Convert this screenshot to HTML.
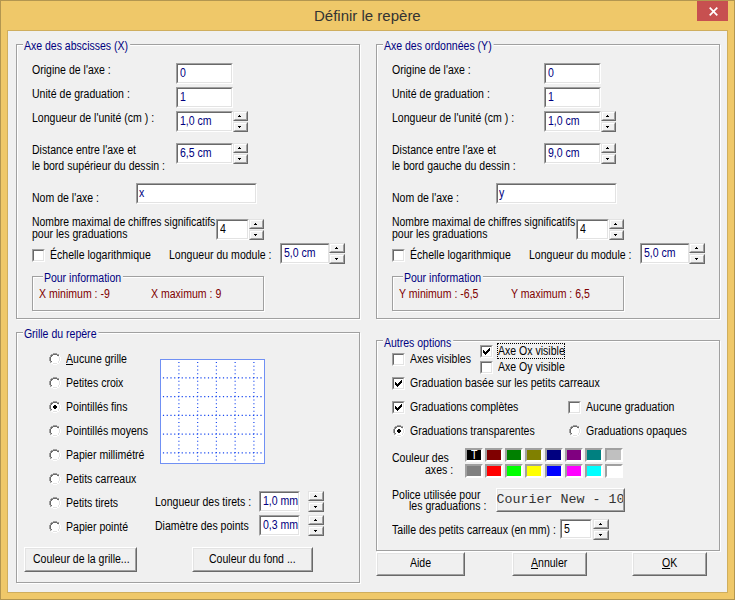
<!DOCTYPE html>
<html><head><meta charset="utf-8"><style>
html,body{margin:0;padding:0;width:735px;height:600px;overflow:hidden;position:relative;background:#efc869}
div,svg,span{position:absolute;box-sizing:border-box}
svg{overflow:visible}
.t{font-family:"Liberation Sans",sans-serif;font-size:12px;line-height:14px;white-space:pre;transform-origin:0 0;color:#000}
u{text-decoration:underline}
</style></head><body>
<div style="left:0px;top:0px;width:735px;height:600px;background:#efc869;border:1px solid #b39650;box-sizing:border-box;"></div>
<div style="left:7px;top:30px;width:721px;height:563px;background:#f0f0f0;border:1px solid #cfae5e;box-sizing:border-box;"></div>
<div style="left:697px;top:1px;width:31px;height:20px;background:#c75050;"></div>
<svg style="left:697px;top:1px" width="31" height="20"><path d="M12.7 6.7l7.6 7.6M20.3 6.7l-7.6 7.6" stroke="#fff" stroke-width="1.7"/></svg>
<span class="t" style="left:314px;top:7px;font-size:15px;line-height:18px;color:#333;transform:scaleX(1)">Définir le repère</span>
<div style="left:17px;top:45px;width:344px;height:275px;border:1px solid #fff;"></div>
<div style="left:16px;top:44px;width:344px;height:275px;border:1px solid #a0a0a0;"></div>
<span class="t" style="left:24px;top:39px;color:#000080;transform:scaleX(0.878);background:#f0f0f0;padding:0 2px 0 1px;margin-left:-1px;">Axe des abscisses (X)</span>
<span class="t" style="left:32px;top:63px;transform:scaleX(0.878);">Origine de l'axe :</span>
<span class="t" style="left:32px;top:87px;transform:scaleX(0.878);">Unité de graduation :</span>
<span class="t" style="left:32px;top:111px;transform:scaleX(0.878);">Longueur de l'unité (cm ) :</span>
<span class="t" style="left:32px;top:143px;transform:scaleX(0.878);">Distance entre l'axe et</span>
<span class="t" style="left:32px;top:159px;transform:scaleX(0.878);">le bord supérieur du dessin :</span>
<span class="t" style="left:32px;top:191px;transform:scaleX(0.878);">Nom de l'axe :</span>
<span class="t" style="left:32px;top:215px;transform:scaleX(0.868);">Nombre maximal de chiffres significatifs</span>
<span class="t" style="left:32px;top:227px;transform:scaleX(0.878);">pour les graduations</span>
<div style="left:176px;top:63px;width:57px;height:21px;background:#fff;border-style:solid;border-width:1px;border-color:#a0a0a0 #fff #fff #a0a0a0;"></div>
<div style="left:177px;top:64px;width:55px;height:19px;border-style:solid;border-width:1px;border-color:#696969 #e3e3e3 #e3e3e3 #696969;"></div>
<span class="t" style="left:180px;top:66px;color:#000080;transform:scaleX(0.878);">0</span>
<div style="left:176px;top:87px;width:57px;height:21px;background:#fff;border-style:solid;border-width:1px;border-color:#a0a0a0 #fff #fff #a0a0a0;"></div>
<div style="left:177px;top:88px;width:55px;height:19px;border-style:solid;border-width:1px;border-color:#696969 #e3e3e3 #e3e3e3 #696969;"></div>
<span class="t" style="left:180px;top:90px;color:#000080;transform:scaleX(0.878);">1</span>
<div style="left:176px;top:111px;width:57px;height:21px;background:#fff;border-style:solid;border-width:1px;border-color:#a0a0a0 #fff #fff #a0a0a0;"></div>
<div style="left:177px;top:112px;width:55px;height:19px;border-style:solid;border-width:1px;border-color:#696969 #e3e3e3 #e3e3e3 #696969;"></div>
<span class="t" style="left:180px;top:114px;color:#000080;transform:scaleX(0.878);">1,0 cm</span>
<div style="left:233px;top:111px;width:15px;height:10px;background:#f0f0f0;border-style:solid;border-width:1px;border-color:#e3e3e3 #696969 #696969 #e3e3e3;"></div>
<div style="left:234px;top:112px;width:13px;height:8px;border-style:solid;border-width:1px;border-color:#fff #a0a0a0 #a0a0a0 #fff;"></div>
<div style="left:233px;top:122px;width:15px;height:10px;background:#f0f0f0;border-style:solid;border-width:1px;border-color:#e3e3e3 #696969 #696969 #e3e3e3;"></div>
<div style="left:234px;top:123px;width:13px;height:8px;border-style:solid;border-width:1px;border-color:#fff #a0a0a0 #a0a0a0 #fff;"></div>
<div style="left:239px;top:115px;width:1px;height:1px;background:#000"></div>
<div style="left:238px;top:116px;width:3px;height:1px;background:#000"></div>
<div style="left:238px;top:126px;width:3px;height:1px;background:#000"></div>
<div style="left:239px;top:127px;width:1px;height:1px;background:#000"></div>
<div style="left:176px;top:143px;width:57px;height:21px;background:#fff;border-style:solid;border-width:1px;border-color:#a0a0a0 #fff #fff #a0a0a0;"></div>
<div style="left:177px;top:144px;width:55px;height:19px;border-style:solid;border-width:1px;border-color:#696969 #e3e3e3 #e3e3e3 #696969;"></div>
<span class="t" style="left:180px;top:146px;color:#000080;transform:scaleX(0.878);">6,5 cm</span>
<div style="left:233px;top:143px;width:15px;height:10px;background:#f0f0f0;border-style:solid;border-width:1px;border-color:#e3e3e3 #696969 #696969 #e3e3e3;"></div>
<div style="left:234px;top:144px;width:13px;height:8px;border-style:solid;border-width:1px;border-color:#fff #a0a0a0 #a0a0a0 #fff;"></div>
<div style="left:233px;top:154px;width:15px;height:10px;background:#f0f0f0;border-style:solid;border-width:1px;border-color:#e3e3e3 #696969 #696969 #e3e3e3;"></div>
<div style="left:234px;top:155px;width:13px;height:8px;border-style:solid;border-width:1px;border-color:#fff #a0a0a0 #a0a0a0 #fff;"></div>
<div style="left:239px;top:147px;width:1px;height:1px;background:#000"></div>
<div style="left:238px;top:148px;width:3px;height:1px;background:#000"></div>
<div style="left:238px;top:158px;width:3px;height:1px;background:#000"></div>
<div style="left:239px;top:159px;width:1px;height:1px;background:#000"></div>
<div style="left:136px;top:183px;width:121px;height:21px;background:#fff;border-style:solid;border-width:1px;border-color:#a0a0a0 #fff #fff #a0a0a0;"></div>
<div style="left:137px;top:184px;width:119px;height:19px;border-style:solid;border-width:1px;border-color:#696969 #e3e3e3 #e3e3e3 #696969;"></div>
<span class="t" style="left:139px;top:186px;color:#000080;transform:scaleX(0.878);">x</span>
<div style="left:216px;top:219px;width:33px;height:21px;background:#fff;border-style:solid;border-width:1px;border-color:#a0a0a0 #fff #fff #a0a0a0;"></div>
<div style="left:217px;top:220px;width:31px;height:19px;border-style:solid;border-width:1px;border-color:#696969 #e3e3e3 #e3e3e3 #696969;"></div>
<span class="t" style="left:220px;top:222px;transform:scaleX(0.878);">4</span>
<div style="left:249px;top:219px;width:15px;height:10px;background:#f0f0f0;border-style:solid;border-width:1px;border-color:#e3e3e3 #696969 #696969 #e3e3e3;"></div>
<div style="left:250px;top:220px;width:13px;height:8px;border-style:solid;border-width:1px;border-color:#fff #a0a0a0 #a0a0a0 #fff;"></div>
<div style="left:249px;top:230px;width:15px;height:10px;background:#f0f0f0;border-style:solid;border-width:1px;border-color:#e3e3e3 #696969 #696969 #e3e3e3;"></div>
<div style="left:250px;top:231px;width:13px;height:8px;border-style:solid;border-width:1px;border-color:#fff #a0a0a0 #a0a0a0 #fff;"></div>
<div style="left:255px;top:223px;width:1px;height:1px;background:#000"></div>
<div style="left:254px;top:224px;width:3px;height:1px;background:#000"></div>
<div style="left:254px;top:234px;width:3px;height:1px;background:#000"></div>
<div style="left:255px;top:235px;width:1px;height:1px;background:#000"></div>
<div style="left:32px;top:249px;width:13px;height:13px;background:#fff;border-style:solid;border-width:1px;border-color:#a0a0a0 #fff #fff #a0a0a0;"></div>
<div style="left:33px;top:250px;width:11px;height:11px;border-style:solid;border-width:1px;border-color:#696969 #e3e3e3 #e3e3e3 #696969;"></div>
<span class="t" style="left:50px;top:248px;transform:scaleX(0.878);">Échelle logarithmique</span>
<span class="t" style="left:169px;top:248px;transform:scaleX(0.878);">Longueur du module :</span>
<div style="left:280px;top:243px;width:50px;height:21px;background:#fff;border-style:solid;border-width:1px;border-color:#a0a0a0 #fff #fff #a0a0a0;"></div>
<div style="left:281px;top:244px;width:48px;height:19px;border-style:solid;border-width:1px;border-color:#696969 #e3e3e3 #e3e3e3 #696969;"></div>
<span class="t" style="left:284px;top:246px;color:#000080;transform:scaleX(0.878);">5,0 cm</span>
<div style="left:329px;top:243px;width:16px;height:10px;background:#f0f0f0;border-style:solid;border-width:1px;border-color:#e3e3e3 #696969 #696969 #e3e3e3;"></div>
<div style="left:330px;top:244px;width:14px;height:8px;border-style:solid;border-width:1px;border-color:#fff #a0a0a0 #a0a0a0 #fff;"></div>
<div style="left:329px;top:254px;width:16px;height:10px;background:#f0f0f0;border-style:solid;border-width:1px;border-color:#e3e3e3 #696969 #696969 #e3e3e3;"></div>
<div style="left:330px;top:255px;width:14px;height:8px;border-style:solid;border-width:1px;border-color:#fff #a0a0a0 #a0a0a0 #fff;"></div>
<div style="left:336px;top:247px;width:1px;height:1px;background:#000"></div>
<div style="left:335px;top:248px;width:3px;height:1px;background:#000"></div>
<div style="left:335px;top:258px;width:3px;height:1px;background:#000"></div>
<div style="left:336px;top:259px;width:1px;height:1px;background:#000"></div>
<div style="left:33px;top:277px;width:232px;height:35px;border:1px solid #fff;"></div>
<div style="left:32px;top:276px;width:232px;height:35px;border:1px solid #a0a0a0;"></div>
<span class="t" style="left:44px;top:271px;color:#000080;transform:scaleX(0.878);background:#f0f0f0;padding:0 2px 0 1px;margin-left:-1px;">Pour information</span>
<span class="t" style="left:39px;top:287px;color:#800000;transform:scaleX(0.878);">X minimum : -9</span>
<span class="t" style="left:151px;top:287px;color:#800000;transform:scaleX(0.878);">X maximum : 9</span>
<div style="left:377px;top:45px;width:344px;height:275px;border:1px solid #fff;"></div>
<div style="left:376px;top:44px;width:344px;height:275px;border:1px solid #a0a0a0;"></div>
<span class="t" style="left:384px;top:39px;color:#000080;transform:scaleX(0.878);background:#f0f0f0;padding:0 2px 0 1px;margin-left:-1px;">Axe des ordonnées (Y)</span>
<span class="t" style="left:392px;top:63px;transform:scaleX(0.878);">Origine de l'axe :</span>
<span class="t" style="left:392px;top:87px;transform:scaleX(0.878);">Unité de graduation :</span>
<span class="t" style="left:392px;top:111px;transform:scaleX(0.878);">Longueur de l'unité (cm ) :</span>
<span class="t" style="left:392px;top:143px;transform:scaleX(0.878);">Distance entre l'axe et</span>
<span class="t" style="left:392px;top:159px;transform:scaleX(0.878);">le bord gauche du dessin :</span>
<span class="t" style="left:392px;top:191px;transform:scaleX(0.878);">Nom de l'axe :</span>
<span class="t" style="left:392px;top:215px;transform:scaleX(0.868);">Nombre maximal de chiffres significatifs</span>
<span class="t" style="left:392px;top:227px;transform:scaleX(0.878);">pour les graduations</span>
<div style="left:544px;top:63px;width:57px;height:21px;background:#fff;border-style:solid;border-width:1px;border-color:#a0a0a0 #fff #fff #a0a0a0;"></div>
<div style="left:545px;top:64px;width:55px;height:19px;border-style:solid;border-width:1px;border-color:#696969 #e3e3e3 #e3e3e3 #696969;"></div>
<span class="t" style="left:548px;top:66px;color:#000080;transform:scaleX(0.878);">0</span>
<div style="left:544px;top:87px;width:57px;height:21px;background:#fff;border-style:solid;border-width:1px;border-color:#a0a0a0 #fff #fff #a0a0a0;"></div>
<div style="left:545px;top:88px;width:55px;height:19px;border-style:solid;border-width:1px;border-color:#696969 #e3e3e3 #e3e3e3 #696969;"></div>
<span class="t" style="left:548px;top:90px;color:#000080;transform:scaleX(0.878);">1</span>
<div style="left:544px;top:111px;width:57px;height:21px;background:#fff;border-style:solid;border-width:1px;border-color:#a0a0a0 #fff #fff #a0a0a0;"></div>
<div style="left:545px;top:112px;width:55px;height:19px;border-style:solid;border-width:1px;border-color:#696969 #e3e3e3 #e3e3e3 #696969;"></div>
<span class="t" style="left:548px;top:114px;color:#000080;transform:scaleX(0.878);">1,0 cm</span>
<div style="left:601px;top:111px;width:15px;height:10px;background:#f0f0f0;border-style:solid;border-width:1px;border-color:#e3e3e3 #696969 #696969 #e3e3e3;"></div>
<div style="left:602px;top:112px;width:13px;height:8px;border-style:solid;border-width:1px;border-color:#fff #a0a0a0 #a0a0a0 #fff;"></div>
<div style="left:601px;top:122px;width:15px;height:10px;background:#f0f0f0;border-style:solid;border-width:1px;border-color:#e3e3e3 #696969 #696969 #e3e3e3;"></div>
<div style="left:602px;top:123px;width:13px;height:8px;border-style:solid;border-width:1px;border-color:#fff #a0a0a0 #a0a0a0 #fff;"></div>
<div style="left:607px;top:115px;width:1px;height:1px;background:#000"></div>
<div style="left:606px;top:116px;width:3px;height:1px;background:#000"></div>
<div style="left:606px;top:126px;width:3px;height:1px;background:#000"></div>
<div style="left:607px;top:127px;width:1px;height:1px;background:#000"></div>
<div style="left:544px;top:143px;width:57px;height:21px;background:#fff;border-style:solid;border-width:1px;border-color:#a0a0a0 #fff #fff #a0a0a0;"></div>
<div style="left:545px;top:144px;width:55px;height:19px;border-style:solid;border-width:1px;border-color:#696969 #e3e3e3 #e3e3e3 #696969;"></div>
<span class="t" style="left:548px;top:146px;color:#000080;transform:scaleX(0.878);">9,0 cm</span>
<div style="left:601px;top:143px;width:15px;height:10px;background:#f0f0f0;border-style:solid;border-width:1px;border-color:#e3e3e3 #696969 #696969 #e3e3e3;"></div>
<div style="left:602px;top:144px;width:13px;height:8px;border-style:solid;border-width:1px;border-color:#fff #a0a0a0 #a0a0a0 #fff;"></div>
<div style="left:601px;top:154px;width:15px;height:10px;background:#f0f0f0;border-style:solid;border-width:1px;border-color:#e3e3e3 #696969 #696969 #e3e3e3;"></div>
<div style="left:602px;top:155px;width:13px;height:8px;border-style:solid;border-width:1px;border-color:#fff #a0a0a0 #a0a0a0 #fff;"></div>
<div style="left:607px;top:147px;width:1px;height:1px;background:#000"></div>
<div style="left:606px;top:148px;width:3px;height:1px;background:#000"></div>
<div style="left:606px;top:158px;width:3px;height:1px;background:#000"></div>
<div style="left:607px;top:159px;width:1px;height:1px;background:#000"></div>
<div style="left:496px;top:183px;width:121px;height:21px;background:#fff;border-style:solid;border-width:1px;border-color:#a0a0a0 #fff #fff #a0a0a0;"></div>
<div style="left:497px;top:184px;width:119px;height:19px;border-style:solid;border-width:1px;border-color:#696969 #e3e3e3 #e3e3e3 #696969;"></div>
<span class="t" style="left:499px;top:186px;color:#000080;transform:scaleX(0.878);">y</span>
<div style="left:576px;top:219px;width:33px;height:21px;background:#fff;border-style:solid;border-width:1px;border-color:#a0a0a0 #fff #fff #a0a0a0;"></div>
<div style="left:577px;top:220px;width:31px;height:19px;border-style:solid;border-width:1px;border-color:#696969 #e3e3e3 #e3e3e3 #696969;"></div>
<span class="t" style="left:580px;top:222px;transform:scaleX(0.878);">4</span>
<div style="left:609px;top:219px;width:15px;height:10px;background:#f0f0f0;border-style:solid;border-width:1px;border-color:#e3e3e3 #696969 #696969 #e3e3e3;"></div>
<div style="left:610px;top:220px;width:13px;height:8px;border-style:solid;border-width:1px;border-color:#fff #a0a0a0 #a0a0a0 #fff;"></div>
<div style="left:609px;top:230px;width:15px;height:10px;background:#f0f0f0;border-style:solid;border-width:1px;border-color:#e3e3e3 #696969 #696969 #e3e3e3;"></div>
<div style="left:610px;top:231px;width:13px;height:8px;border-style:solid;border-width:1px;border-color:#fff #a0a0a0 #a0a0a0 #fff;"></div>
<div style="left:615px;top:223px;width:1px;height:1px;background:#000"></div>
<div style="left:614px;top:224px;width:3px;height:1px;background:#000"></div>
<div style="left:614px;top:234px;width:3px;height:1px;background:#000"></div>
<div style="left:615px;top:235px;width:1px;height:1px;background:#000"></div>
<div style="left:392px;top:249px;width:13px;height:13px;background:#fff;border-style:solid;border-width:1px;border-color:#a0a0a0 #fff #fff #a0a0a0;"></div>
<div style="left:393px;top:250px;width:11px;height:11px;border-style:solid;border-width:1px;border-color:#696969 #e3e3e3 #e3e3e3 #696969;"></div>
<span class="t" style="left:410px;top:248px;transform:scaleX(0.878);">Échelle logarithmique</span>
<span class="t" style="left:529px;top:248px;transform:scaleX(0.878);">Longueur du module :</span>
<div style="left:640px;top:243px;width:50px;height:21px;background:#fff;border-style:solid;border-width:1px;border-color:#a0a0a0 #fff #fff #a0a0a0;"></div>
<div style="left:641px;top:244px;width:48px;height:19px;border-style:solid;border-width:1px;border-color:#696969 #e3e3e3 #e3e3e3 #696969;"></div>
<span class="t" style="left:644px;top:246px;color:#000080;transform:scaleX(0.878);">5,0 cm</span>
<div style="left:689px;top:243px;width:16px;height:10px;background:#f0f0f0;border-style:solid;border-width:1px;border-color:#e3e3e3 #696969 #696969 #e3e3e3;"></div>
<div style="left:690px;top:244px;width:14px;height:8px;border-style:solid;border-width:1px;border-color:#fff #a0a0a0 #a0a0a0 #fff;"></div>
<div style="left:689px;top:254px;width:16px;height:10px;background:#f0f0f0;border-style:solid;border-width:1px;border-color:#e3e3e3 #696969 #696969 #e3e3e3;"></div>
<div style="left:690px;top:255px;width:14px;height:8px;border-style:solid;border-width:1px;border-color:#fff #a0a0a0 #a0a0a0 #fff;"></div>
<div style="left:696px;top:247px;width:1px;height:1px;background:#000"></div>
<div style="left:695px;top:248px;width:3px;height:1px;background:#000"></div>
<div style="left:695px;top:258px;width:3px;height:1px;background:#000"></div>
<div style="left:696px;top:259px;width:1px;height:1px;background:#000"></div>
<div style="left:393px;top:277px;width:232px;height:35px;border:1px solid #fff;"></div>
<div style="left:392px;top:276px;width:232px;height:35px;border:1px solid #a0a0a0;"></div>
<span class="t" style="left:404px;top:271px;color:#000080;transform:scaleX(0.878);background:#f0f0f0;padding:0 2px 0 1px;margin-left:-1px;">Pour information</span>
<span class="t" style="left:399px;top:287px;color:#800000;transform:scaleX(0.878);">Y minimum : -6,5</span>
<span class="t" style="left:511px;top:287px;color:#800000;transform:scaleX(0.878);">Y maximum : 6,5</span>
<div style="left:17px;top:333px;width:344px;height:251px;border:1px solid #fff;"></div>
<div style="left:16px;top:332px;width:344px;height:251px;border:1px solid #a0a0a0;"></div>
<span class="t" style="left:24px;top:327px;color:#000080;transform:scaleX(0.878);background:#f0f0f0;padding:0 2px 0 1px;margin-left:-1px;">Grille du repère</span>
<svg style="left:49px;top:353px" width="12" height="12" shape-rendering="crispEdges"><path d="M4 0h4v1h-4zM2 1h2v1h-2zM8 1h2v1h-2zM1 2h1v1h-1zM1 3h1v1h-1zM0 4h1v1h-1zM0 5h1v1h-1zM0 6h1v1h-1zM0 7h1v1h-1zM1 8h1v1h-1zM1 9h1v1h-1z" fill="#a0a0a0"/><path d="M4 1h4v1h-4zM2 2h2v1h-2zM8 2h2v1h-2zM2 3h1v1h-1zM1 4h1v1h-1zM1 5h1v1h-1zM1 6h1v1h-1zM1 7h1v1h-1zM2 8h1v1h-1z" fill="#696969"/><path d="M4 2h4v1h-4zM10 2h1v1h-1zM3 3h6v1h-6zM10 3h1v1h-1zM2 4h8v1h-8zM11 4h1v1h-1zM2 5h8v1h-8zM11 5h1v1h-1zM2 6h8v1h-8zM11 6h1v1h-1zM2 7h8v1h-8zM11 7h1v1h-1zM3 8h6v1h-6zM10 8h1v1h-1zM3 9h6v1h-6zM10 9h1v1h-1zM2 10h2v1h-2zM8 10h2v1h-2zM4 11h4v1h-4z" fill="#fff"/><path d="M9 3h1v1h-1zM10 4h1v1h-1zM10 5h1v1h-1zM10 6h1v1h-1zM10 7h1v1h-1zM9 8h1v1h-1zM2 9h1v1h-1zM9 9h1v1h-1zM4 10h4v1h-4z" fill="#e3e3e3"/></svg>
<span class="t" style="left:66px;top:352px;transform:scaleX(0.878);"><u>A</u>ucune grille</span>
<svg style="left:49px;top:377px" width="12" height="12" shape-rendering="crispEdges"><path d="M4 0h4v1h-4zM2 1h2v1h-2zM8 1h2v1h-2zM1 2h1v1h-1zM1 3h1v1h-1zM0 4h1v1h-1zM0 5h1v1h-1zM0 6h1v1h-1zM0 7h1v1h-1zM1 8h1v1h-1zM1 9h1v1h-1z" fill="#a0a0a0"/><path d="M4 1h4v1h-4zM2 2h2v1h-2zM8 2h2v1h-2zM2 3h1v1h-1zM1 4h1v1h-1zM1 5h1v1h-1zM1 6h1v1h-1zM1 7h1v1h-1zM2 8h1v1h-1z" fill="#696969"/><path d="M4 2h4v1h-4zM10 2h1v1h-1zM3 3h6v1h-6zM10 3h1v1h-1zM2 4h8v1h-8zM11 4h1v1h-1zM2 5h8v1h-8zM11 5h1v1h-1zM2 6h8v1h-8zM11 6h1v1h-1zM2 7h8v1h-8zM11 7h1v1h-1zM3 8h6v1h-6zM10 8h1v1h-1zM3 9h6v1h-6zM10 9h1v1h-1zM2 10h2v1h-2zM8 10h2v1h-2zM4 11h4v1h-4z" fill="#fff"/><path d="M9 3h1v1h-1zM10 4h1v1h-1zM10 5h1v1h-1zM10 6h1v1h-1zM10 7h1v1h-1zM9 8h1v1h-1zM2 9h1v1h-1zM9 9h1v1h-1zM4 10h4v1h-4z" fill="#e3e3e3"/></svg>
<span class="t" style="left:66px;top:376px;transform:scaleX(0.878);">Petites croix</span>
<svg style="left:49px;top:401px" width="12" height="12" shape-rendering="crispEdges"><path d="M4 0h4v1h-4zM2 1h2v1h-2zM8 1h2v1h-2zM1 2h1v1h-1zM1 3h1v1h-1zM0 4h1v1h-1zM0 5h1v1h-1zM0 6h1v1h-1zM0 7h1v1h-1zM1 8h1v1h-1zM1 9h1v1h-1z" fill="#a0a0a0"/><path d="M4 1h4v1h-4zM2 2h2v1h-2zM8 2h2v1h-2zM2 3h1v1h-1zM1 4h1v1h-1zM1 5h1v1h-1zM1 6h1v1h-1zM1 7h1v1h-1zM2 8h1v1h-1z" fill="#696969"/><path d="M4 2h4v1h-4zM10 2h1v1h-1zM3 3h6v1h-6zM10 3h1v1h-1zM2 4h8v1h-8zM11 4h1v1h-1zM2 5h8v1h-8zM11 5h1v1h-1zM2 6h8v1h-8zM11 6h1v1h-1zM2 7h8v1h-8zM11 7h1v1h-1zM3 8h6v1h-6zM10 8h1v1h-1zM3 9h6v1h-6zM10 9h1v1h-1zM2 10h2v1h-2zM8 10h2v1h-2zM4 11h4v1h-4z" fill="#fff"/><path d="M9 3h1v1h-1zM10 4h1v1h-1zM10 5h1v1h-1zM10 6h1v1h-1zM10 7h1v1h-1zM9 8h1v1h-1zM2 9h1v1h-1zM9 9h1v1h-1zM4 10h4v1h-4z" fill="#e3e3e3"/><path d="M5 4h2v1h-2zM4 5h4v2h-4zM5 7h2v1h-2z" fill="#000"/></svg>
<span class="t" style="left:66px;top:400px;transform:scaleX(0.878);">Pointillés fins</span>
<svg style="left:49px;top:425px" width="12" height="12" shape-rendering="crispEdges"><path d="M4 0h4v1h-4zM2 1h2v1h-2zM8 1h2v1h-2zM1 2h1v1h-1zM1 3h1v1h-1zM0 4h1v1h-1zM0 5h1v1h-1zM0 6h1v1h-1zM0 7h1v1h-1zM1 8h1v1h-1zM1 9h1v1h-1z" fill="#a0a0a0"/><path d="M4 1h4v1h-4zM2 2h2v1h-2zM8 2h2v1h-2zM2 3h1v1h-1zM1 4h1v1h-1zM1 5h1v1h-1zM1 6h1v1h-1zM1 7h1v1h-1zM2 8h1v1h-1z" fill="#696969"/><path d="M4 2h4v1h-4zM10 2h1v1h-1zM3 3h6v1h-6zM10 3h1v1h-1zM2 4h8v1h-8zM11 4h1v1h-1zM2 5h8v1h-8zM11 5h1v1h-1zM2 6h8v1h-8zM11 6h1v1h-1zM2 7h8v1h-8zM11 7h1v1h-1zM3 8h6v1h-6zM10 8h1v1h-1zM3 9h6v1h-6zM10 9h1v1h-1zM2 10h2v1h-2zM8 10h2v1h-2zM4 11h4v1h-4z" fill="#fff"/><path d="M9 3h1v1h-1zM10 4h1v1h-1zM10 5h1v1h-1zM10 6h1v1h-1zM10 7h1v1h-1zM9 8h1v1h-1zM2 9h1v1h-1zM9 9h1v1h-1zM4 10h4v1h-4z" fill="#e3e3e3"/></svg>
<span class="t" style="left:66px;top:424px;transform:scaleX(0.878);">Pointillés moyens</span>
<svg style="left:49px;top:449px" width="12" height="12" shape-rendering="crispEdges"><path d="M4 0h4v1h-4zM2 1h2v1h-2zM8 1h2v1h-2zM1 2h1v1h-1zM1 3h1v1h-1zM0 4h1v1h-1zM0 5h1v1h-1zM0 6h1v1h-1zM0 7h1v1h-1zM1 8h1v1h-1zM1 9h1v1h-1z" fill="#a0a0a0"/><path d="M4 1h4v1h-4zM2 2h2v1h-2zM8 2h2v1h-2zM2 3h1v1h-1zM1 4h1v1h-1zM1 5h1v1h-1zM1 6h1v1h-1zM1 7h1v1h-1zM2 8h1v1h-1z" fill="#696969"/><path d="M4 2h4v1h-4zM10 2h1v1h-1zM3 3h6v1h-6zM10 3h1v1h-1zM2 4h8v1h-8zM11 4h1v1h-1zM2 5h8v1h-8zM11 5h1v1h-1zM2 6h8v1h-8zM11 6h1v1h-1zM2 7h8v1h-8zM11 7h1v1h-1zM3 8h6v1h-6zM10 8h1v1h-1zM3 9h6v1h-6zM10 9h1v1h-1zM2 10h2v1h-2zM8 10h2v1h-2zM4 11h4v1h-4z" fill="#fff"/><path d="M9 3h1v1h-1zM10 4h1v1h-1zM10 5h1v1h-1zM10 6h1v1h-1zM10 7h1v1h-1zM9 8h1v1h-1zM2 9h1v1h-1zM9 9h1v1h-1zM4 10h4v1h-4z" fill="#e3e3e3"/></svg>
<span class="t" style="left:66px;top:448px;transform:scaleX(0.878);">Papier millimétré</span>
<svg style="left:49px;top:473px" width="12" height="12" shape-rendering="crispEdges"><path d="M4 0h4v1h-4zM2 1h2v1h-2zM8 1h2v1h-2zM1 2h1v1h-1zM1 3h1v1h-1zM0 4h1v1h-1zM0 5h1v1h-1zM0 6h1v1h-1zM0 7h1v1h-1zM1 8h1v1h-1zM1 9h1v1h-1z" fill="#a0a0a0"/><path d="M4 1h4v1h-4zM2 2h2v1h-2zM8 2h2v1h-2zM2 3h1v1h-1zM1 4h1v1h-1zM1 5h1v1h-1zM1 6h1v1h-1zM1 7h1v1h-1zM2 8h1v1h-1z" fill="#696969"/><path d="M4 2h4v1h-4zM10 2h1v1h-1zM3 3h6v1h-6zM10 3h1v1h-1zM2 4h8v1h-8zM11 4h1v1h-1zM2 5h8v1h-8zM11 5h1v1h-1zM2 6h8v1h-8zM11 6h1v1h-1zM2 7h8v1h-8zM11 7h1v1h-1zM3 8h6v1h-6zM10 8h1v1h-1zM3 9h6v1h-6zM10 9h1v1h-1zM2 10h2v1h-2zM8 10h2v1h-2zM4 11h4v1h-4z" fill="#fff"/><path d="M9 3h1v1h-1zM10 4h1v1h-1zM10 5h1v1h-1zM10 6h1v1h-1zM10 7h1v1h-1zM9 8h1v1h-1zM2 9h1v1h-1zM9 9h1v1h-1zM4 10h4v1h-4z" fill="#e3e3e3"/></svg>
<span class="t" style="left:66px;top:472px;transform:scaleX(0.878);">Petits carreaux</span>
<svg style="left:49px;top:497px" width="12" height="12" shape-rendering="crispEdges"><path d="M4 0h4v1h-4zM2 1h2v1h-2zM8 1h2v1h-2zM1 2h1v1h-1zM1 3h1v1h-1zM0 4h1v1h-1zM0 5h1v1h-1zM0 6h1v1h-1zM0 7h1v1h-1zM1 8h1v1h-1zM1 9h1v1h-1z" fill="#a0a0a0"/><path d="M4 1h4v1h-4zM2 2h2v1h-2zM8 2h2v1h-2zM2 3h1v1h-1zM1 4h1v1h-1zM1 5h1v1h-1zM1 6h1v1h-1zM1 7h1v1h-1zM2 8h1v1h-1z" fill="#696969"/><path d="M4 2h4v1h-4zM10 2h1v1h-1zM3 3h6v1h-6zM10 3h1v1h-1zM2 4h8v1h-8zM11 4h1v1h-1zM2 5h8v1h-8zM11 5h1v1h-1zM2 6h8v1h-8zM11 6h1v1h-1zM2 7h8v1h-8zM11 7h1v1h-1zM3 8h6v1h-6zM10 8h1v1h-1zM3 9h6v1h-6zM10 9h1v1h-1zM2 10h2v1h-2zM8 10h2v1h-2zM4 11h4v1h-4z" fill="#fff"/><path d="M9 3h1v1h-1zM10 4h1v1h-1zM10 5h1v1h-1zM10 6h1v1h-1zM10 7h1v1h-1zM9 8h1v1h-1zM2 9h1v1h-1zM9 9h1v1h-1zM4 10h4v1h-4z" fill="#e3e3e3"/></svg>
<span class="t" style="left:66px;top:496px;transform:scaleX(0.878);">Petits tirets</span>
<svg style="left:49px;top:521px" width="12" height="12" shape-rendering="crispEdges"><path d="M4 0h4v1h-4zM2 1h2v1h-2zM8 1h2v1h-2zM1 2h1v1h-1zM1 3h1v1h-1zM0 4h1v1h-1zM0 5h1v1h-1zM0 6h1v1h-1zM0 7h1v1h-1zM1 8h1v1h-1zM1 9h1v1h-1z" fill="#a0a0a0"/><path d="M4 1h4v1h-4zM2 2h2v1h-2zM8 2h2v1h-2zM2 3h1v1h-1zM1 4h1v1h-1zM1 5h1v1h-1zM1 6h1v1h-1zM1 7h1v1h-1zM2 8h1v1h-1z" fill="#696969"/><path d="M4 2h4v1h-4zM10 2h1v1h-1zM3 3h6v1h-6zM10 3h1v1h-1zM2 4h8v1h-8zM11 4h1v1h-1zM2 5h8v1h-8zM11 5h1v1h-1zM2 6h8v1h-8zM11 6h1v1h-1zM2 7h8v1h-8zM11 7h1v1h-1zM3 8h6v1h-6zM10 8h1v1h-1zM3 9h6v1h-6zM10 9h1v1h-1zM2 10h2v1h-2zM8 10h2v1h-2zM4 11h4v1h-4z" fill="#fff"/><path d="M9 3h1v1h-1zM10 4h1v1h-1zM10 5h1v1h-1zM10 6h1v1h-1zM10 7h1v1h-1zM9 8h1v1h-1zM2 9h1v1h-1zM9 9h1v1h-1zM4 10h4v1h-4z" fill="#e3e3e3"/></svg>
<span class="t" style="left:66px;top:520px;transform:scaleX(0.878);">Papier pointé</span>
<svg style="left:160px;top:359px" width="105" height="105"><rect x="0.5" y="0.5" width="104" height="104" fill="#fff" stroke="#7090f4"/><line x1="18.9" y1="2.9" x2="18.9" y2="103" stroke="#1848f0" stroke-width="1.2" stroke-dasharray="1.2 2.55"/><line x1="2.9" y1="18.9" x2="103" y2="18.9" stroke="#1848f0" stroke-width="1.2" stroke-dasharray="1.2 2.55"/><line x1="37.65" y1="2.9" x2="37.65" y2="103" stroke="#1848f0" stroke-width="1.2" stroke-dasharray="1.2 2.55"/><line x1="2.9" y1="37.65" x2="103" y2="37.65" stroke="#1848f0" stroke-width="1.2" stroke-dasharray="1.2 2.55"/><line x1="56.4" y1="2.9" x2="56.4" y2="103" stroke="#1848f0" stroke-width="1.2" stroke-dasharray="1.2 2.55"/><line x1="2.9" y1="56.4" x2="103" y2="56.4" stroke="#1848f0" stroke-width="1.2" stroke-dasharray="1.2 2.55"/><line x1="75.15" y1="2.9" x2="75.15" y2="103" stroke="#1848f0" stroke-width="1.2" stroke-dasharray="1.2 2.55"/><line x1="2.9" y1="75.15" x2="103" y2="75.15" stroke="#1848f0" stroke-width="1.2" stroke-dasharray="1.2 2.55"/><line x1="93.9" y1="2.9" x2="93.9" y2="103" stroke="#1848f0" stroke-width="1.2" stroke-dasharray="1.2 2.55"/><line x1="2.9" y1="93.9" x2="103" y2="93.9" stroke="#1848f0" stroke-width="1.2" stroke-dasharray="1.2 2.55"/></svg>
<span class="t" style="left:155px;top:495px;transform:scaleX(0.878);">Longueur des tirets :</span>
<span class="t" style="left:155px;top:519px;transform:scaleX(0.878);">Diamètre des points</span>
<div style="left:259px;top:491px;width:41px;height:21px;background:#fff;border-style:solid;border-width:1px;border-color:#a0a0a0 #fff #fff #a0a0a0;"></div>
<div style="left:260px;top:492px;width:39px;height:19px;border-style:solid;border-width:1px;border-color:#696969 #e3e3e3 #e3e3e3 #696969;"></div>
<span class="t" style="left:263px;top:494px;color:#000080;transform:scaleX(0.878);">1,0 mm</span>
<div style="left:308px;top:491px;width:16px;height:10px;background:#f0f0f0;border-style:solid;border-width:1px;border-color:#e3e3e3 #696969 #696969 #e3e3e3;"></div>
<div style="left:309px;top:492px;width:14px;height:8px;border-style:solid;border-width:1px;border-color:#fff #a0a0a0 #a0a0a0 #fff;"></div>
<div style="left:308px;top:502px;width:16px;height:10px;background:#f0f0f0;border-style:solid;border-width:1px;border-color:#e3e3e3 #696969 #696969 #e3e3e3;"></div>
<div style="left:309px;top:503px;width:14px;height:8px;border-style:solid;border-width:1px;border-color:#fff #a0a0a0 #a0a0a0 #fff;"></div>
<div style="left:315px;top:495px;width:1px;height:1px;background:#000"></div>
<div style="left:314px;top:496px;width:3px;height:1px;background:#000"></div>
<div style="left:314px;top:506px;width:3px;height:1px;background:#000"></div>
<div style="left:315px;top:507px;width:1px;height:1px;background:#000"></div>
<div style="left:259px;top:515px;width:41px;height:21px;background:#fff;border-style:solid;border-width:1px;border-color:#a0a0a0 #fff #fff #a0a0a0;"></div>
<div style="left:260px;top:516px;width:39px;height:19px;border-style:solid;border-width:1px;border-color:#696969 #e3e3e3 #e3e3e3 #696969;"></div>
<span class="t" style="left:263px;top:518px;color:#000080;transform:scaleX(0.878);">0,3 mm</span>
<div style="left:308px;top:515px;width:16px;height:10px;background:#f0f0f0;border-style:solid;border-width:1px;border-color:#e3e3e3 #696969 #696969 #e3e3e3;"></div>
<div style="left:309px;top:516px;width:14px;height:8px;border-style:solid;border-width:1px;border-color:#fff #a0a0a0 #a0a0a0 #fff;"></div>
<div style="left:308px;top:526px;width:16px;height:10px;background:#f0f0f0;border-style:solid;border-width:1px;border-color:#e3e3e3 #696969 #696969 #e3e3e3;"></div>
<div style="left:309px;top:527px;width:14px;height:8px;border-style:solid;border-width:1px;border-color:#fff #a0a0a0 #a0a0a0 #fff;"></div>
<div style="left:315px;top:519px;width:1px;height:1px;background:#000"></div>
<div style="left:314px;top:520px;width:3px;height:1px;background:#000"></div>
<div style="left:314px;top:530px;width:3px;height:1px;background:#000"></div>
<div style="left:315px;top:531px;width:1px;height:1px;background:#000"></div>
<div style="left:24px;top:547px;width:113px;height:25px;background:#f0f0f0;border-style:solid;border-width:1px;border-color:#fff #696969 #696969 #fff;"></div>
<div style="left:25px;top:548px;width:111px;height:23px;border-style:solid;border-width:1px;border-color:#e3e3e3 #a0a0a0 #a0a0a0 #e3e3e3;"></div>
<span class="t" style="left:33px;top:552px;transform:scaleX(0.878);">Couleur de la grille...</span>
<div style="left:192px;top:547px;width:121px;height:25px;background:#f0f0f0;border-style:solid;border-width:1px;border-color:#fff #696969 #696969 #fff;"></div>
<div style="left:193px;top:548px;width:119px;height:23px;border-style:solid;border-width:1px;border-color:#e3e3e3 #a0a0a0 #a0a0a0 #e3e3e3;"></div>
<span class="t" style="left:209px;top:552px;transform:scaleX(0.878);">Couleur du fond ...</span>
<div style="left:377px;top:341px;width:344px;height:211px;border:1px solid #fff;"></div>
<div style="left:376px;top:340px;width:344px;height:211px;border:1px solid #a0a0a0;"></div>
<span class="t" style="left:384px;top:336px;color:#000080;transform:scaleX(0.878);background:#f0f0f0;padding:0 2px 0 1px;margin-left:-1px;">Autres options</span>
<div style="left:392px;top:353px;width:13px;height:13px;background:#fff;border-style:solid;border-width:1px;border-color:#a0a0a0 #fff #fff #a0a0a0;"></div>
<div style="left:393px;top:354px;width:11px;height:11px;border-style:solid;border-width:1px;border-color:#696969 #e3e3e3 #e3e3e3 #696969;"></div>
<span class="t" style="left:410px;top:352px;transform:scaleX(0.878);">Axes visibles</span>
<div style="left:480px;top:345px;width:13px;height:13px;background:#fff;border-style:solid;border-width:1px;border-color:#a0a0a0 #fff #fff #a0a0a0;"></div>
<div style="left:481px;top:346px;width:11px;height:11px;border-style:solid;border-width:1px;border-color:#696969 #e3e3e3 #e3e3e3 #696969;"></div>
<svg style="left:483px;top:348px" width="7" height="7" shape-rendering="crispEdges"><path d="M6 0h1v1h-1zM5 1h2v1h-2zM0 2h1v1h-1zM4 2h3v1h-3zM0 3h2v1h-2zM3 3h3v1h-3zM0 4h5v1h-5zM1 5h3v1h-3zM2 6h1v1h-1z" fill="#000"/></svg>
<span class="t" style="left:498px;top:344px;transform:scaleX(0.878);">Axe Ox visible</span>
<div style="left:497px;top:343px;width:68px;height:16px;border:1px dotted #000;box-sizing:border-box;"></div>
<div style="left:480px;top:361px;width:13px;height:13px;background:#fff;border-style:solid;border-width:1px;border-color:#a0a0a0 #fff #fff #a0a0a0;"></div>
<div style="left:481px;top:362px;width:11px;height:11px;border-style:solid;border-width:1px;border-color:#696969 #e3e3e3 #e3e3e3 #696969;"></div>
<span class="t" style="left:498px;top:360px;transform:scaleX(0.878);">Axe Oy visible</span>
<div style="left:392px;top:377px;width:13px;height:13px;background:#fff;border-style:solid;border-width:1px;border-color:#a0a0a0 #fff #fff #a0a0a0;"></div>
<div style="left:393px;top:378px;width:11px;height:11px;border-style:solid;border-width:1px;border-color:#696969 #e3e3e3 #e3e3e3 #696969;"></div>
<svg style="left:395px;top:380px" width="7" height="7" shape-rendering="crispEdges"><path d="M6 0h1v1h-1zM5 1h2v1h-2zM0 2h1v1h-1zM4 2h3v1h-3zM0 3h2v1h-2zM3 3h3v1h-3zM0 4h5v1h-5zM1 5h3v1h-3zM2 6h1v1h-1z" fill="#000"/></svg>
<span class="t" style="left:410px;top:376px;transform:scaleX(0.878);">Graduation basée sur les petits carreaux</span>
<div style="left:392px;top:401px;width:13px;height:13px;background:#fff;border-style:solid;border-width:1px;border-color:#a0a0a0 #fff #fff #a0a0a0;"></div>
<div style="left:393px;top:402px;width:11px;height:11px;border-style:solid;border-width:1px;border-color:#696969 #e3e3e3 #e3e3e3 #696969;"></div>
<svg style="left:395px;top:404px" width="7" height="7" shape-rendering="crispEdges"><path d="M6 0h1v1h-1zM5 1h2v1h-2zM0 2h1v1h-1zM4 2h3v1h-3zM0 3h2v1h-2zM3 3h3v1h-3zM0 4h5v1h-5zM1 5h3v1h-3zM2 6h1v1h-1z" fill="#000"/></svg>
<span class="t" style="left:410px;top:400px;transform:scaleX(0.878);">Graduations complètes</span>
<div style="left:568px;top:401px;width:13px;height:13px;background:#fff;border-style:solid;border-width:1px;border-color:#a0a0a0 #fff #fff #a0a0a0;"></div>
<div style="left:569px;top:402px;width:11px;height:11px;border-style:solid;border-width:1px;border-color:#696969 #e3e3e3 #e3e3e3 #696969;"></div>
<span class="t" style="left:586px;top:400px;transform:scaleX(0.878);">Aucune graduation</span>
<svg style="left:393px;top:425px" width="12" height="12" shape-rendering="crispEdges"><path d="M4 0h4v1h-4zM2 1h2v1h-2zM8 1h2v1h-2zM1 2h1v1h-1zM1 3h1v1h-1zM0 4h1v1h-1zM0 5h1v1h-1zM0 6h1v1h-1zM0 7h1v1h-1zM1 8h1v1h-1zM1 9h1v1h-1z" fill="#a0a0a0"/><path d="M4 1h4v1h-4zM2 2h2v1h-2zM8 2h2v1h-2zM2 3h1v1h-1zM1 4h1v1h-1zM1 5h1v1h-1zM1 6h1v1h-1zM1 7h1v1h-1zM2 8h1v1h-1z" fill="#696969"/><path d="M4 2h4v1h-4zM10 2h1v1h-1zM3 3h6v1h-6zM10 3h1v1h-1zM2 4h8v1h-8zM11 4h1v1h-1zM2 5h8v1h-8zM11 5h1v1h-1zM2 6h8v1h-8zM11 6h1v1h-1zM2 7h8v1h-8zM11 7h1v1h-1zM3 8h6v1h-6zM10 8h1v1h-1zM3 9h6v1h-6zM10 9h1v1h-1zM2 10h2v1h-2zM8 10h2v1h-2zM4 11h4v1h-4z" fill="#fff"/><path d="M9 3h1v1h-1zM10 4h1v1h-1zM10 5h1v1h-1zM10 6h1v1h-1zM10 7h1v1h-1zM9 8h1v1h-1zM2 9h1v1h-1zM9 9h1v1h-1zM4 10h4v1h-4z" fill="#e3e3e3"/><path d="M5 4h2v1h-2zM4 5h4v2h-4zM5 7h2v1h-2z" fill="#000"/></svg>
<span class="t" style="left:410px;top:424px;transform:scaleX(0.878);">Graduations transparentes</span>
<svg style="left:569px;top:425px" width="12" height="12" shape-rendering="crispEdges"><path d="M4 0h4v1h-4zM2 1h2v1h-2zM8 1h2v1h-2zM1 2h1v1h-1zM1 3h1v1h-1zM0 4h1v1h-1zM0 5h1v1h-1zM0 6h1v1h-1zM0 7h1v1h-1zM1 8h1v1h-1zM1 9h1v1h-1z" fill="#a0a0a0"/><path d="M4 1h4v1h-4zM2 2h2v1h-2zM8 2h2v1h-2zM2 3h1v1h-1zM1 4h1v1h-1zM1 5h1v1h-1zM1 6h1v1h-1zM1 7h1v1h-1zM2 8h1v1h-1z" fill="#696969"/><path d="M4 2h4v1h-4zM10 2h1v1h-1zM3 3h6v1h-6zM10 3h1v1h-1zM2 4h8v1h-8zM11 4h1v1h-1zM2 5h8v1h-8zM11 5h1v1h-1zM2 6h8v1h-8zM11 6h1v1h-1zM2 7h8v1h-8zM11 7h1v1h-1zM3 8h6v1h-6zM10 8h1v1h-1zM3 9h6v1h-6zM10 9h1v1h-1zM2 10h2v1h-2zM8 10h2v1h-2zM4 11h4v1h-4z" fill="#fff"/><path d="M9 3h1v1h-1zM10 4h1v1h-1zM10 5h1v1h-1zM10 6h1v1h-1zM10 7h1v1h-1zM9 8h1v1h-1zM2 9h1v1h-1zM9 9h1v1h-1zM4 10h4v1h-4z" fill="#e3e3e3"/></svg>
<span class="t" style="left:586px;top:424px;transform:scaleX(0.878);">Graduations opaques</span>
<span class="t" style="left:392px;top:451px;transform:scaleX(0.878);">Couleur des</span>
<span class="t" style="left:425px;top:463px;transform:scaleX(0.878);">axes :</span>
<div style="left:465px;top:448px;width:18px;height:14px;background:#000;border-style:solid;border-width:2px;border-color:#a0a0a0 #fff #fff #a0a0a0;box-sizing:border-box;"></div>
<div style="left:485px;top:448px;width:18px;height:14px;background:#800000;border-style:solid;border-width:2px;border-color:#a0a0a0 #fff #fff #a0a0a0;box-sizing:border-box;"></div>
<div style="left:505px;top:448px;width:18px;height:14px;background:#008000;border-style:solid;border-width:2px;border-color:#a0a0a0 #fff #fff #a0a0a0;box-sizing:border-box;"></div>
<div style="left:525px;top:448px;width:18px;height:14px;background:#808000;border-style:solid;border-width:2px;border-color:#a0a0a0 #fff #fff #a0a0a0;box-sizing:border-box;"></div>
<div style="left:545px;top:448px;width:18px;height:14px;background:#000080;border-style:solid;border-width:2px;border-color:#a0a0a0 #fff #fff #a0a0a0;box-sizing:border-box;"></div>
<div style="left:565px;top:448px;width:18px;height:14px;background:#800080;border-style:solid;border-width:2px;border-color:#a0a0a0 #fff #fff #a0a0a0;box-sizing:border-box;"></div>
<div style="left:585px;top:448px;width:18px;height:14px;background:#008080;border-style:solid;border-width:2px;border-color:#a0a0a0 #fff #fff #a0a0a0;box-sizing:border-box;"></div>
<div style="left:605px;top:448px;width:18px;height:14px;background:#c0c0c0;border-style:solid;border-width:2px;border-color:#a0a0a0 #fff #fff #a0a0a0;box-sizing:border-box;"></div>
<div style="left:465px;top:464px;width:18px;height:14px;background:#808080;border-style:solid;border-width:2px;border-color:#a0a0a0 #fff #fff #a0a0a0;box-sizing:border-box;"></div>
<div style="left:485px;top:464px;width:18px;height:14px;background:#f00;border-style:solid;border-width:2px;border-color:#a0a0a0 #fff #fff #a0a0a0;box-sizing:border-box;"></div>
<div style="left:505px;top:464px;width:18px;height:14px;background:#0f0;border-style:solid;border-width:2px;border-color:#a0a0a0 #fff #fff #a0a0a0;box-sizing:border-box;"></div>
<div style="left:525px;top:464px;width:18px;height:14px;background:#ff0;border-style:solid;border-width:2px;border-color:#a0a0a0 #fff #fff #a0a0a0;box-sizing:border-box;"></div>
<div style="left:545px;top:464px;width:18px;height:14px;background:#00f;border-style:solid;border-width:2px;border-color:#a0a0a0 #fff #fff #a0a0a0;box-sizing:border-box;"></div>
<div style="left:565px;top:464px;width:18px;height:14px;background:#f0f;border-style:solid;border-width:2px;border-color:#a0a0a0 #fff #fff #a0a0a0;box-sizing:border-box;"></div>
<div style="left:585px;top:464px;width:18px;height:14px;background:#0ff;border-style:solid;border-width:2px;border-color:#a0a0a0 #fff #fff #a0a0a0;box-sizing:border-box;"></div>
<div style="left:605px;top:464px;width:18px;height:14px;background:#fff;border-style:solid;border-width:2px;border-color:#a0a0a0 #fff #fff #a0a0a0;box-sizing:border-box;"></div>
<span class="t" style="left:471px;top:448px;color:#fff;transform:scaleX(0.878);">T</span>
<span class="t" style="left:392px;top:488px;transform:scaleX(0.878);">Police utilisée pour</span>
<span class="t" style="left:409px;top:499px;transform:scaleX(0.878);">les graduations :</span>
<div style="left:496px;top:488px;width:129px;height:24px;background:#f0f0f0;border-style:solid;border-width:1px;border-color:#fff #696969 #696969 #fff;"></div>
<div style="left:497px;top:489px;width:127px;height:22px;border-style:solid;border-width:1px;border-color:#e3e3e3 #a0a0a0 #a0a0a0 #e3e3e3;"></div>
<div style="left:497px;top:489px;width:126px;height:21px;overflow:hidden"><span class="t" style="left:-0.5px;top:3px;font-family:'Liberation Mono',monospace;font-size:13.33px;line-height:16px;color:#333">Courier New - 10</span></div>
<span class="t" style="left:392px;top:523px;transform:scaleX(0.878);">Taille des petits carreaux (en mm) :</span>
<div style="left:560px;top:519px;width:32px;height:20px;background:#fff;border-style:solid;border-width:1px;border-color:#a0a0a0 #fff #fff #a0a0a0;"></div>
<div style="left:561px;top:520px;width:30px;height:18px;border-style:solid;border-width:1px;border-color:#696969 #e3e3e3 #e3e3e3 #696969;"></div>
<span class="t" style="left:564px;top:522px;transform:scaleX(0.878);">5</span>
<div style="left:593px;top:519px;width:16px;height:10px;background:#f0f0f0;border-style:solid;border-width:1px;border-color:#e3e3e3 #696969 #696969 #e3e3e3;"></div>
<div style="left:594px;top:520px;width:14px;height:8px;border-style:solid;border-width:1px;border-color:#fff #a0a0a0 #a0a0a0 #fff;"></div>
<div style="left:593px;top:530px;width:16px;height:10px;background:#f0f0f0;border-style:solid;border-width:1px;border-color:#e3e3e3 #696969 #696969 #e3e3e3;"></div>
<div style="left:594px;top:531px;width:14px;height:8px;border-style:solid;border-width:1px;border-color:#fff #a0a0a0 #a0a0a0 #fff;"></div>
<div style="left:600px;top:523px;width:1px;height:1px;background:#000"></div>
<div style="left:599px;top:524px;width:3px;height:1px;background:#000"></div>
<div style="left:599px;top:534px;width:3px;height:1px;background:#000"></div>
<div style="left:600px;top:535px;width:1px;height:1px;background:#000"></div>
<div style="left:376px;top:552px;width:89px;height:24px;background:#f0f0f0;border-style:solid;border-width:1px;border-color:#fff #696969 #696969 #fff;"></div>
<div style="left:377px;top:553px;width:87px;height:22px;border-style:solid;border-width:1px;border-color:#e3e3e3 #a0a0a0 #a0a0a0 #e3e3e3;"></div>
<span class="t" style="left:410px;top:556px;transform:scaleX(0.878);">Aide</span>
<div style="left:512px;top:552px;width:75px;height:24px;background:#f0f0f0;border-style:solid;border-width:1px;border-color:#fff #696969 #696969 #fff;"></div>
<div style="left:513px;top:553px;width:73px;height:22px;border-style:solid;border-width:1px;border-color:#e3e3e3 #a0a0a0 #a0a0a0 #e3e3e3;"></div>
<span class="t" style="left:531px;top:556px;transform:scaleX(0.878);"><u>A</u>nnuler</span>
<div style="left:632px;top:552px;width:75px;height:24px;background:#f0f0f0;border-style:solid;border-width:1px;border-color:#fff #696969 #696969 #fff;"></div>
<div style="left:633px;top:553px;width:73px;height:22px;border-style:solid;border-width:1px;border-color:#e3e3e3 #a0a0a0 #a0a0a0 #e3e3e3;"></div>
<span class="t" style="left:662px;top:556px;transform:scaleX(0.878);"><u>O</u>K</span>
</body></html>
